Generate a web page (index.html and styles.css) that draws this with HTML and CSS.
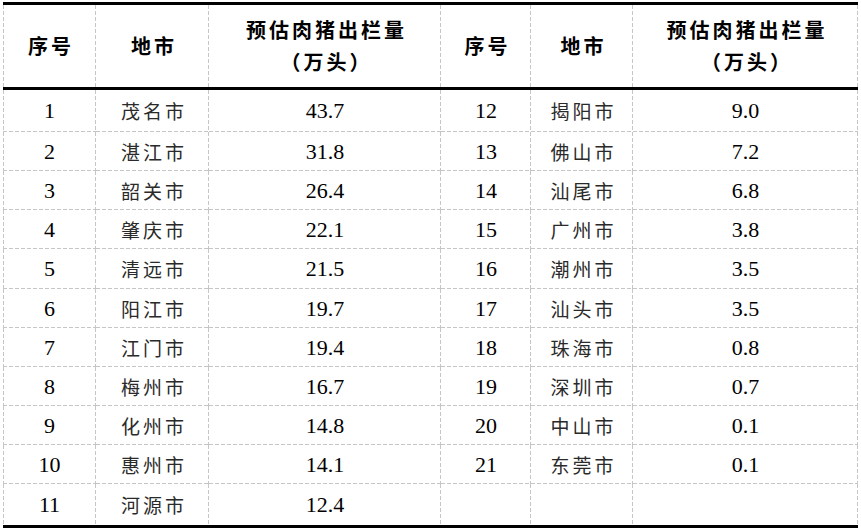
FILE: index.html
```html
<!DOCTYPE html>
<html lang="zh-CN">
<head>
<meta charset="utf-8">
<title>预估肉猪出栏量</title>
<link rel="stylesheet" href="styles.css">
</head>
<body>
<div class="table">
  <div class="thead">
    <div class="cell first"><span class="zh">序号</span></div>
    <div class="cell"><span class="zh">地市</span></div>
    <div class="cell"><span class="zh two">预估肉猪出栏量<br>（万头）</span></div>
    <div class="cell"><span class="zh">序号</span></div>
    <div class="cell"><span class="zh">地市</span></div>
    <div class="cell"><span class="zh two">预估肉猪出栏量<br>（万头）</span></div>
  </div>
  <div class="tbody">
    <div class="cell first num">1</div><div class="cell city">茂名市</div><div class="cell num">43.7</div>
    <div class="cell num">12</div><div class="cell city">揭阳市</div><div class="cell num">9.0</div>

    <div class="cell first num">2</div><div class="cell city">湛江市</div><div class="cell num">31.8</div>
    <div class="cell num">13</div><div class="cell city">佛山市</div><div class="cell num">7.2</div>

    <div class="cell first num">3</div><div class="cell city">韶关市</div><div class="cell num">26.4</div>
    <div class="cell num">14</div><div class="cell city">汕尾市</div><div class="cell num">6.8</div>

    <div class="cell first num">4</div><div class="cell city">肇庆市</div><div class="cell num">22.1</div>
    <div class="cell num">15</div><div class="cell city">广州市</div><div class="cell num">3.8</div>

    <div class="cell first num">5</div><div class="cell city">清远市</div><div class="cell num">21.5</div>
    <div class="cell num">16</div><div class="cell city">潮州市</div><div class="cell num">3.5</div>

    <div class="cell first num">6</div><div class="cell city">阳江市</div><div class="cell num">19.7</div>
    <div class="cell num">17</div><div class="cell city">汕头市</div><div class="cell num">3.5</div>

    <div class="cell first num">7</div><div class="cell city">江门市</div><div class="cell num">19.4</div>
    <div class="cell num">18</div><div class="cell city">珠海市</div><div class="cell num">0.8</div>

    <div class="cell first num">8</div><div class="cell city">梅州市</div><div class="cell num">16.7</div>
    <div class="cell num">19</div><div class="cell city">深圳市</div><div class="cell num">0.7</div>

    <div class="cell first num">9</div><div class="cell city">化州市</div><div class="cell num">14.8</div>
    <div class="cell num">20</div><div class="cell city">中山市</div><div class="cell num">0.1</div>

    <div class="cell first num">10</div><div class="cell city">惠州市</div><div class="cell num">14.1</div>
    <div class="cell num">21</div><div class="cell city">东莞市</div><div class="cell num">0.1</div>

    <div class="cell first num last">11</div><div class="cell city last">河源市</div><div class="cell num last">12.4</div>
    <div class="cell last"></div><div class="cell last"></div><div class="cell last"></div>
  </div>
</div>
</body>
</html>
```
FILE: styles.css
```css
html, body {
  margin: 0;
  padding: 0;
  background: #ffffff;
}

body {
  padding: 2px 0 0 3px;
  font-family: "Liberation Serif", "Noto Sans CJK SC", serif;
  color: #000000;
}

.table {
  width: 855px;
  border-top: 3px solid #000000;
  border-bottom: 3px solid #000000;
}

.thead,
.tbody {
  display: grid;
  grid-template-columns: 93px 113px 232px 90px 102px 225px;
}

.thead {
  grid-template-rows: 82px;
  border-bottom: 3px solid #000000;
}

.tbody {
  grid-template-rows: 42px 39px 39px 39px 40px 39px 39px 39px 39px 39px 41px;
}

.cell {
  --dash-v: repeating-linear-gradient(to bottom, #c6c6c6 0 4px, transparent 4px 6px);
  --dash-h: repeating-linear-gradient(to right, #c6c6c6 0 4px, transparent 4px 6px);
  box-sizing: border-box;
  display: flex;
  align-items: center;
  justify-content: center;
  text-align: center;
  background-image: var(--dash-v);
  background-size: 1px 100%;
  background-position: right top;
  background-repeat: no-repeat;
}

.cell.first {
  background-image: var(--dash-v), var(--dash-v);
  background-size: 1px 100%, 1px 100%;
  background-position: right top, left top;
}

.tbody .cell {
  background-image: var(--dash-v), var(--dash-h);
  background-size: 1px 100%, 100% 1px;
  background-position: right top, left bottom;
}

.tbody .cell.first {
  background-image: var(--dash-v), var(--dash-v), var(--dash-h);
  background-size: 1px 100%, 1px 100%, 100% 1px;
  background-position: right top, left top, left bottom;
}

.tbody .cell.last {
  background-image: var(--dash-v);
  background-size: 1px 100%;
  background-position: right top;
}

.tbody .cell.first.last {
  background-image: var(--dash-v), var(--dash-v);
  background-size: 1px 100%, 1px 100%;
  background-position: right top, left top;
}

.zh {
  font-family: "Noto Sans CJK SC", sans-serif;
  font-weight: 700;
  font-size: 20px;
  letter-spacing: 3px;
  padding-left: 3px;
  line-height: 32px;
}

.num {
  font-size: 22px;
  line-height: 24px;
}

.city {
  font-family: "Noto Sans CJK SC", sans-serif;
  font-size: 19px;
  letter-spacing: 3px;
  padding-left: 3px;
  color: #2a2a2a;
  line-height: 24px;
}
```
